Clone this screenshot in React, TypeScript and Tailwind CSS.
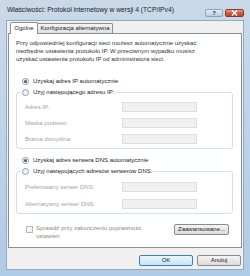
import React from "react";

const font = "font-['Liberation_Sans',Arial,sans-serif]";

function Radio({ checked }: { checked?: boolean }) {
  return (
    <span className="w-[7px] h-[7px] rounded-full border border-[#8c9aa8] bg-gradient-to-br from-[#e8eaec] to-[#ffffff] flex items-center justify-center shrink-0">
      {checked && <span className="w-[3px] h-[3px] rounded-full bg-[#2b5d8f]" />}
    </span>
  );
}

function IpBox() {
  return (
    <div className="w-[75px] h-[10px] border border-[#dedede] bg-[#f0f0f0] flex items-center text-[5px] text-[#a8a8a8] leading-none">
      <span className="w-[18px]" />
      <span className="w-[18px]">.</span>
      <span className="w-[18px]">.</span>
      <span>.</span>
    </div>
  );
}

function FieldRow({ label }: { label: string }) {
  return (
    <div className="h-[10px] flex items-center">
      <span className="w-[105px] pl-[8px] text-[#a3a3a3]">{label}</span>
      <IpBox />
    </div>
  );
}

function Btn({ children, primary }: { children: React.ReactNode; primary?: boolean }) {
  return (
    <div
      className={
        "h-[11px] rounded-[2px] border flex items-center justify-center text-[6px] " +
        (primary
          ? "border-[#3c7fb1] bg-gradient-to-b from-[#eaf6fd] to-[#c4e5f6] text-[#222]"
          : "border-[#8a8a8a] bg-gradient-to-b from-[#f4f4f4] to-[#dcdcdc] text-[#222]")
      }
    >
      {children}
    </div>
  );
}

export default function App() {
  return (
    <div className={`w-[250px] h-[276px] flex flex-col overflow-hidden bg-gradient-to-b from-[#c9d9ea] via-[#bed3e9] to-[#b0cbe6] text-[6px] text-[#222] ${font}`}>
      {/* Title bar */}
      <div className="h-[20px] flex items-start pl-[7px] pr-[6px] pt-[6px] shrink-0">
        <span className="text-[6.7px] text-[#1a1a1a] leading-[8px] whitespace-nowrap">
          Właściwości: Protokół internetowy w wersji 4 (TCP/IPv4)
        </span>
        <div className="ml-auto flex gap-[2px] mt-[3px]">
          <div className="w-[18px] h-[8px] rounded-[2px] border border-[#8ea3bb] bg-gradient-to-b from-[#e6eef7] to-[#b8cbe0] flex items-center justify-center text-[6px] leading-none text-[#2b3f55] font-bold">
            ?
          </div>
          <div className="w-[19px] h-[8px] rounded-[2px] border border-[#8a3a2c] bg-gradient-to-b from-[#e7a08f] via-[#d0573f] to-[#c2442c] flex items-center justify-center">
            <svg width="7" height="6" viewBox="0 0 7 6">
              <path d="M1 0.5 L6 5.5 M6 0.5 L1 5.5" stroke="#ffffff" strokeWidth="1.4" />
            </svg>
          </div>
        </div>
      </div>

      {/* Client area */}
      <div className="mx-[6px] h-[250px] bg-[#f0f0f0] border border-[#94a9bf] flex flex-col px-[1px]">
        {/* Tabs */}
        <div className="h-[12px] flex items-end pl-[2px] relative z-10">
          <div className="h-[12px] w-[28px] bg-white border border-b-0 border-[#8c8e94] rounded-t-[2px] flex items-center justify-center text-[#222] -mb-[1px]">
            Ogólne
          </div>
          <div className="h-[10px] w-[75px] bg-gradient-to-b from-[#f3f3f3] to-[#e2e2e2] border border-l-0 border-b-0 border-[#8c8e94] rounded-tr-[2px] flex items-center justify-center text-[#222]">
            Konfiguracja alternatywna
          </div>
        </div>

        {/* Panel */}
        <div className="h-[215px] bg-white border border-[#8c8e94] flex flex-col">
          <p className="pt-[5px] pl-[7px] pr-[4px] leading-[8px] text-[#333]">
            Przy odpowiedniej konfiguracji sieci możesz automatycznie uzyskać
            <br />
            niezbędne ustawienia protokołu IP. W przeciwnym wypadku musisz
            <br />
            uzyskać ustawienia protokołu IP od administratora sieci.
          </p>

          <div className="mt-[13px] h-[10px] flex items-center gap-[4px] pl-[13px]">
            <Radio checked />
            <span>Uzyskaj adres IP automatycznie</span>
          </div>

          <fieldset className="mt-[1px] ml-[7px] mr-[8px] border border-[#d5dfe5] rounded-[3px] pb-[4px]">
            <legend className="ml-[4px] px-[1px] h-[10px] flex items-center gap-[4px]">
              <Radio />
              <span>Użyj następującego adresu IP:</span>
            </legend>
            <div className="pt-[5px] flex flex-col gap-[6px]">
              <FieldRow label="Adres IP:" />
              <FieldRow label="Maska podsieci:" />
              <FieldRow label="Brama domyślna:" />
            </div>
          </fieldset>

          <div className="mt-[6px] h-[10px] flex items-center gap-[4px] pl-[13px]">
            <Radio checked />
            <span>Uzyskaj adres serwera DNS automatycznie</span>
          </div>

          <fieldset className="mt-[1px] ml-[7px] mr-[8px] border border-[#d5dfe5] rounded-[3px] pb-[4px]">
            <legend className="ml-[4px] px-[1px] h-[10px] flex items-center gap-[4px]">
              <Radio />
              <span>Użyj następujących adresów serwerów DNS:</span>
            </legend>
            <div className="pt-[6px] flex flex-col gap-[7px]">
              <FieldRow label="Preferowany serwer DNS:" />
              <FieldRow label="Alternatywny serwer DNS:" />
            </div>
          </fieldset>

          <div className="mt-[10px] flex items-start pl-[17px] pr-[12px]">
            <span className="mt-[2px] w-[7px] h-[7px] border border-[#b8b8b8] bg-[#f4f4f4] shrink-0" />
            <span className="ml-[3px] leading-[8px] text-[#8a8a8a]">
              Sprawdź przy zakończeniu poprawność
              <br />
              ustawień
            </span>
            <div className="ml-auto w-[55px]">
              <Btn>Zaawansowane...</Btn>
            </div>
          </div>
        </div>

        {/* Bottom buttons */}
        <div className="mt-[7px] flex justify-end gap-[4px] pr-[1px]">
          <div className="w-[54px]">
            <Btn primary>OK</Btn>
          </div>
          <div className="w-[44px]">
            <Btn>Anuluj</Btn>
          </div>
        </div>
      </div>
    </div>
  );
}
